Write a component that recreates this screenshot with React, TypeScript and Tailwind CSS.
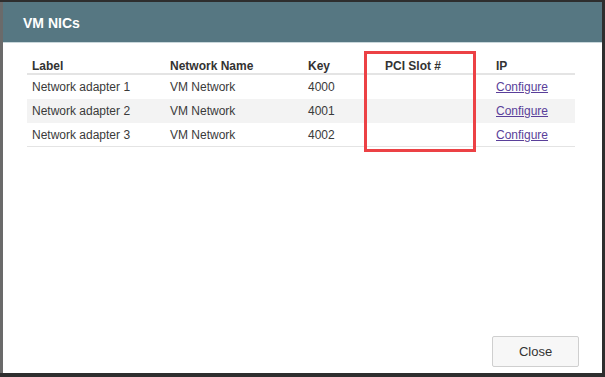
import React from "react";

const rows = [
  { label: "Network adapter 1", network: "VM Network", key: "4000" },
  { label: "Network adapter 2", network: "VM Network", key: "4001" },
  { label: "Network adapter 3", network: "VM Network", key: "4002" },
];

const cols = "grid grid-cols-[138px_138px_77px_111px_84px]";

export default function App() {
  return (
    <div
      className="w-[605px] h-[377px] bg-[#2e2e2e] flex pt-[2px] pb-[4px] pr-[3px]"
      style={{ fontFamily: '"Liberation Sans", Arial, sans-serif' }}
    >
      <div className="w-[3px] bg-[#6a6a6a]" />
      <div className="flex-1 flex flex-col bg-white">
        {/* header */}
        <div className="h-[41px] bg-[#567782] border-b border-[#c9d7db] flex items-center pl-[20px] pt-[3px]">
          <span className="text-white font-bold text-[14px]">VM NICs</span>
        </div>

        <div className="flex-1 flex flex-col pt-[12px] pl-[24px]">
          <div className="relative w-[548px] text-[12px] text-[#3a3a3a]">
            <div className={`${cols} h-[20px] items-center border-b-2 border-[#e4e4e4] font-bold text-[#333] pt-[2px]`}>
              <div className="pl-[5px]">Label</div>
              <div className="pl-[5px]">Network Name</div>
              <div className="pl-[5px]">Key</div>
              <div className="pl-[5px]">PCI Slot #</div>
              <div className="pl-[5px]">IP</div>
            </div>
            {rows.map((r, i) => (
              <div
                key={r.key}
                className={`${cols} h-[24px] items-center ${i === 1 ? "bg-[#f3f3f3]" : ""} ${i === 2 ? "border-b border-[#e4e4e4]" : ""}`}
              >
                <div className="pl-[5px]">{r.label}</div>
                <div className="pl-[5px]">{r.network}</div>
                <div className="pl-[5px]">{r.key}</div>
                <div />
                <div className="pl-[5px]">
                  <a href="#" className="text-[#5a3f9a] underline">
                    Configure
                  </a>
                </div>
              </div>
            ))}
            {/* highlight box */}
            <div className="absolute left-[337px] top-[-4px] w-[112px] h-[101px] border-[3px] border-[#ec4145]" />
          </div>

          <div className="flex-1" />
          <div className="flex justify-end pr-[23px] pb-[6px]">
            <button className="w-[87px] h-[31px] bg-[#f7f7f7] border border-[#cfcfcf] rounded-[2px] text-[13px] text-[#333]">
              Close
            </button>
          </div>
        </div>
      </div>
    </div>
  );
}
